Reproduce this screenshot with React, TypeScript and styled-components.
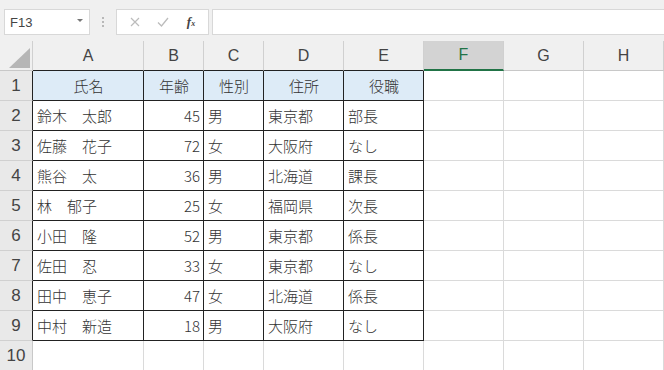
import React from "react";
import styled, { createGlobalStyle } from "styled-components";

const GlobalStyle = createGlobalStyle`
  body {
    margin: 0;
    background: #ffffff;
    font-family: "Noto Sans CJK JP", "Noto Sans", sans-serif;
  }
`;

const COLS = ["A", "B", "C", "D", "E", "F", "G", "H"];
const WIDTHS = [111, 60, 60, 80, 80, 80, 80, 80];
const SELECTED_COL = "F";
const TABLE_COLS = 5; // A..E
const TABLE_ROWS = 9; // 1..9

type Align = "left" | "right" | "center";

const rows: { v: string; align: Align }[][] = [
  [
    { v: "氏名", align: "center" },
    { v: "年齢", align: "center" },
    { v: "性別", align: "center" },
    { v: "住所", align: "center" },
    { v: "役職", align: "center" },
  ],
  ...[
    ["鈴木　太郎", "45", "男", "東京都", "部長"],
    ["佐藤　花子", "72", "女", "大阪府", "なし"],
    ["熊谷　太", "36", "男", "北海道", "課長"],
    ["林　郁子", "25", "女", "福岡県", "次長"],
    ["小田　隆", "52", "男", "東京都", "係長"],
    ["佐田　忍", "33", "女", "東京都", "なし"],
    ["田中　恵子", "47", "女", "北海道", "係長"],
    ["中村　新造", "18", "男", "大阪府", "なし"],
  ].map((r) =>
    r.map((v, i) => ({ v, align: (i === 1 ? "right" : "left") as Align }))
  ),
];

const Page = styled.div`
  width: 664px;
  height: 370px;
  overflow: hidden;
  background: #ffffff;
`;

const Toolbar = styled.div`
  height: 41px;
  box-sizing: border-box;
  background: #f0f0f0;
  display: flex;
  align-items: flex-start;
  padding: 9px 0 0 4px;
`;

const NameBox = styled.div`
  width: 86px;
  height: 26px;
  box-sizing: border-box;
  background: #fff;
  border: 1px solid #d8d8d8;
  display: flex;
  align-items: center;
  justify-content: space-between;
  padding: 0 6px 0 5px;
  font-family: "Liberation Sans", Arial, sans-serif;
  font-size: 13px;
  color: #444;
`;

const Caret = styled.span`
  width: 0;
  height: 0;
  border-left: 3px solid transparent;
  border-right: 3px solid transparent;
  border-top: 3px solid #777;
  margin-bottom: 3px;
`;

const Dots = styled.div`
  width: 26px;
  height: 26px;
  display: flex;
  flex-direction: column;
  align-items: center;
  justify-content: center;
  gap: 2px;

  span {
    width: 2px;
    height: 2px;
    background: #b8b8b8;
  }
`;

const FormulaButtons = styled.div`
  width: 93px;
  height: 26px;
  box-sizing: border-box;
  background: #fff;
  border: 1px solid #d8d8d8;
  display: flex;
  align-items: center;
  justify-content: space-around;
  padding: 0 4px;
`;

const Fx = styled.span`
  font-family: "Liberation Serif", "Times New Roman", serif;
  font-style: italic;
  font-size: 13px;
  color: #444;
  font-weight: bold;

  sub {
    font-size: 8px;
    vertical-align: baseline;
  }
`;

const FormulaInput = styled.div`
  flex: 1;
  height: 26px;
  margin-left: 3px;
  box-sizing: border-box;
  background: #fff;
  border: 1px solid #d8d8d8;
  border-right: none;
`;

const Sheet = styled.div`
  display: grid;
  grid-template-columns: 33px ${WIDTHS.map((w) => `${w}px`).join(" ")};
  grid-auto-rows: 30px;
`;

const Corner = styled.div`
  background: #f0f0f0;
  border-right: 1px solid #d0d0d0;
  border-bottom: 1px solid #c8c8c8;
  box-sizing: border-box;
  position: relative;

  svg {
    position: absolute;
    left: 0;
    top: 0;
  }
`;

const ColHead = styled.div<{ $selected?: boolean; $edge?: boolean }>`
  box-sizing: border-box;
  display: flex;
  align-items: center;
  justify-content: center;
  font-family: "Liberation Sans", Arial, sans-serif;
  font-size: 16px;
  background: ${(p) => (p.$selected ? "#d3d3d3" : "#f0f0f0")};
  color: ${(p) => (p.$selected ? "#217346" : "#444")};
  border-right: 1px solid #d0d0d0;
  border-bottom: ${(p) =>
    p.$selected
      ? "2px solid #217346"
      : p.$edge
      ? "1px solid #222"
      : "1px solid #c8c8c8"};
`;

const RowHead = styled.div<{ $edge?: boolean }>`
  box-sizing: border-box;
  display: flex;
  align-items: center;
  justify-content: center;
  font-family: "Liberation Sans", Arial, sans-serif;
  font-size: 17px;
  color: #444;
  background: #e9e9e9;
  border-bottom: 1px solid #d0d0d0;
  border-right: 1px solid ${(p) => (p.$edge ? "#222" : "#c8c8c8")};
`;

const Cell = styled.div<{ $align: Align; $boxed?: boolean; $header?: boolean }>`
  box-sizing: border-box;
  display: flex;
  align-items: center;
  justify-content: ${(p) =>
    p.$align === "right" ? "flex-end" : p.$align === "center" ? "center" : "flex-start"};
  padding: 0 3px 0 4px;
  font-size: 15px;
  font-weight: 300;
  color: #333;
  white-space: pre;
  background: ${(p) => (p.$header ? "#ddebf7" : "#fff")};
  border-right: 1px solid ${(p) => (p.$boxed ? "#222" : "#dadada")};
  border-bottom: 1px solid ${(p) => (p.$boxed ? "#222" : "#dadada")};
`;

const CrossIcon = () => (
  <svg width="10" height="10" viewBox="0 0 10 10">
    <path d="M1 1L9 9M9 1L1 9" stroke="#bcbcbc" strokeWidth="1.2" fill="none" />
  </svg>
);

const CheckIcon = () => (
  <svg width="12" height="10" viewBox="0 0 12 10">
    <path d="M1 5.5L4.5 9L11 1" stroke="#bcbcbc" strokeWidth="1.3" fill="none" />
  </svg>
);

const App = () => (
  <Page>
    <GlobalStyle />
    <Toolbar>
      <NameBox>
        F13
        <Caret />
      </NameBox>
      <Dots>
        <span />
        <span />
        <span />
      </Dots>
      <FormulaButtons>
        <CrossIcon />
        <CheckIcon />
        <Fx>
          f<sub>x</sub>
        </Fx>
      </FormulaButtons>
      <FormulaInput />
    </Toolbar>
    <Sheet>
      <Corner>
        <svg width="33" height="30">
          <polygon points="9,27 30,27 30,7" fill="#b6b6b6" />
        </svg>
      </Corner>
      {COLS.map((c, i) => (
        <ColHead key={c} $selected={c === SELECTED_COL} $edge={i < TABLE_COLS}>
          {c}
        </ColHead>
      ))}
      {Array.from({ length: 10 }, (_, r) => (
        <React.Fragment key={r}>
          <RowHead $edge={r < TABLE_ROWS}>{r + 1}</RowHead>
          {COLS.map((c, ci) => {
            const data = rows[r]?.[ci];
            return (
              <Cell
                key={c}
                $align={data?.align ?? "left"}
                $boxed={r < TABLE_ROWS && ci < TABLE_COLS}
                $header={r === 0 && ci < TABLE_COLS}
              >
                {data?.v}
              </Cell>
            );
          })}
        </React.Fragment>
      ))}
    </Sheet>
  </Page>
);

export default App;
